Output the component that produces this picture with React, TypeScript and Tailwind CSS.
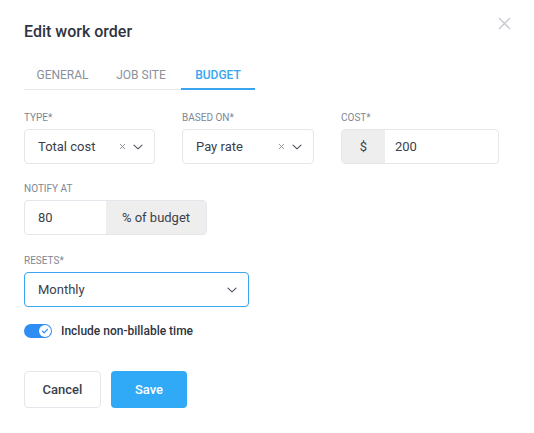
import React from "react";

const Chevron = () => (
  <svg width="12" height="12" viewBox="0 0 12 12" fill="none">
    <path d="M2 4.2l4 3.6 4-3.6" stroke="#4b5160" strokeWidth="1.1" strokeLinecap="round" strokeLinejoin="round" />
  </svg>
);

const Clear = () => (
  <svg width="7" height="7" viewBox="0 0 8 8" fill="none">
    <path d="M1.5 1.5l5 5M6.5 1.5l-5 5" stroke="#8a909c" strokeWidth="1.1" strokeLinecap="round" />
  </svg>
);

const Label = ({ children }: { children: React.ReactNode }) => (
  <div className="text-[10px] leading-[12px] text-[#7e8794] uppercase mb-[5px]">{children}</div>
);

const SelectBox = ({ value, w }: { value: string; w: string }) => (
  <div className={`${w} h-[35px] border border-[#e3e7ec] rounded-[4px] flex items-center pl-[13px] pr-[10px]`}>
    <span className="flex-1 text-[13px] text-[#3a3f4b]">{value}</span>
    <span className="mr-[6px] flex items-center"><Clear /></span>
    <Chevron />
  </div>
);

export default function App() {
  return (
    <div className="w-[534px] h-[433px] bg-white relative" style={{ fontFamily: "Roboto, 'Liberation Sans', sans-serif" }}>
      <button className="absolute left-[498px] top-[16px] w-[14px] h-[14px]">
        <svg width="13" height="13" viewBox="0 0 13 13" fill="none">
          <path d="M1 1l11 11M12 1L1 12" stroke="#c3c7cd" strokeWidth="1.3" />
        </svg>
      </button>
      <div className="pl-[24px] pt-[22px]">
        <h1 className="text-[16px] leading-[20px] font-medium text-[#2f3440]">Edit work order</h1>
        <div className="mt-[26px] flex w-[231px] border-b border-[#e5e8ec] text-[12px] leading-[14px]">
          <div className="w-[77px] text-center pb-[7px] text-[#8a919c]">GENERAL</div>
          <div className="w-[80px] text-center pb-[7px] text-[#8a919c]">JOB SITE</div>
          <div className="w-[74px] text-center pb-[5px] text-[#3aa5ef] font-medium border-b-2 border-[#3aa5ef] -mb-px">BUDGET</div>
        </div>

        <div className="mt-[22px] flex gap-[27px]">
          <div>
            <Label>Type*</Label>
            <SelectBox value="Total cost" w="w-[131px]" />
          </div>
          <div>
            <Label>Based on*</Label>
            <SelectBox value="Pay rate" w="w-[132px]" />
          </div>
          <div>
            <Label>Cost*</Label>
            <div className="w-[158px] h-[35px] border border-[#e3e7ec] rounded-[4px] flex overflow-hidden">
              <div className="w-[43px] bg-[#eeeeef] flex items-center justify-center text-[13px] text-[#3a3f4b]">$</div>
              <div className="flex-1 flex items-center pl-[10px] text-[13px] text-[#3a3f4b]">200</div>
            </div>
          </div>
        </div>

        <div className="mt-[19px]">
          <Label>Notify at</Label>
          <div className="w-[183px] h-[35px] border border-[#e3e7ec] rounded-[4px] flex overflow-hidden">
            <div className="w-[81px] flex items-center pl-[13px] text-[13px] text-[#3a3f4b]">80</div>
            <div className="flex-1 bg-[#eeeeef] flex items-center justify-center text-[13px] text-[#3a3f4b]">% of budget</div>
          </div>
        </div>

        <div className="mt-[20px]">
          <Label>Resets*</Label>
          <div className="w-[225px] h-[35px] border border-[#3aa5ef] rounded-[4px] flex items-center pl-[13px] pr-[10px]">
            <span className="flex-1 text-[13px] text-[#3a3f4b]">Monthly</span>
            <Chevron />
          </div>
        </div>

        <div className="mt-[15px] flex items-center gap-[9px]">
          <div className="w-[28px] h-[14px] rounded-full bg-[#2f8ef4] relative">
            <div className="absolute right-[1px] top-[1px] w-[12px] h-[12px] rounded-full bg-white flex items-center justify-center">
              <svg width="8" height="8" viewBox="0 0 8 8" fill="none">
                <path d="M1.5 4.2l1.7 1.6L6.5 2.3" stroke="#2f8ef4" strokeWidth="1.2" strokeLinecap="round" strokeLinejoin="round" />
              </svg>
            </div>
          </div>
          <span className="text-[12px] font-medium text-[#2f3440]">Include non-billable time</span>
        </div>

        <div className="mt-[31px] flex gap-[10px]">
          <button className="w-[77px] h-[37px] border border-[#e3e7ec] rounded-[4px] text-[13px] font-medium text-[#3a3f4b] bg-white">Cancel</button>
          <button className="w-[76px] h-[37px] rounded-[4px] text-[13px] font-medium text-white bg-[#30a9f6]">Save</button>
        </div>
      </div>
    </div>
  );
}
